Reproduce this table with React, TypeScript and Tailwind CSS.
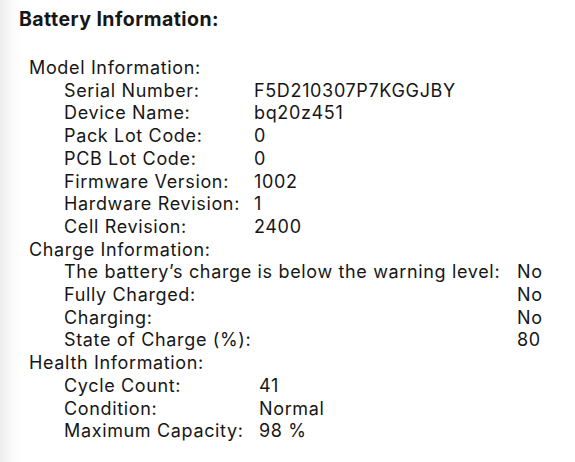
import React from "react";

type Row = [string, string];

const model: Row[] = [
  ["Serial Number:", "F5D210307P7KGGJBY"],
  ["Device Name:", "bq20z451"],
  ["Pack Lot Code:", "0"],
  ["PCB Lot Code:", "0"],
  ["Firmware Version:", "1002"],
  ["Hardware Revision:", "1"],
  ["Cell Revision:", "2400"],
];

const charge: Row[] = [
  ["The battery\u2019s charge is below the warning level:", "No"],
  ["Fully Charged:", "No"],
  ["Charging:", "No"],
  ["State of Charge (%):", "80"],
];

const health: Row[] = [
  ["Cycle Count:", "41"],
  ["Condition:", "Normal"],
  ["Maximum Capacity:", "98 %"],
];

function Section({ title, rows, cols }: { title: string; rows: Row[]; cols: string }) {
  return (
    <div>
      <div>{title}</div>
      <div className={`grid pl-[35px] ${cols}`}>
        {rows.map(([k, v]) => (
          <React.Fragment key={k}>
            <div className="whitespace-nowrap">{k}</div>
            <div>{v}</div>
          </React.Fragment>
        ))}
      </div>
    </div>
  );
}

export default function App() {
  return (
    <div className="w-[575px] h-[462px] overflow-hidden bg-[linear-gradient(to_right,#ececec,#fafafa_12px,#ffffff_22px)] font-['Inter',sans-serif] text-[#161616] pl-[19px] pt-[7px]">
      <h1 className="text-[19.5px] leading-[24px] font-bold tracking-[0.45px]">Battery Information:</h1>
      <div className="pl-[10px] mt-[26px] text-[18px] leading-[22.7px] tracking-[0.65px]">
        <Section title="Model Information:" rows={model} cols="grid-cols-[190px_1fr]" />
        <Section title="Charge Information:" rows={charge} cols="grid-cols-[453px_1fr]" />
        <Section title="Health Information:" rows={health} cols="grid-cols-[195px_1fr]" />
      </div>
    </div>
  );
}
